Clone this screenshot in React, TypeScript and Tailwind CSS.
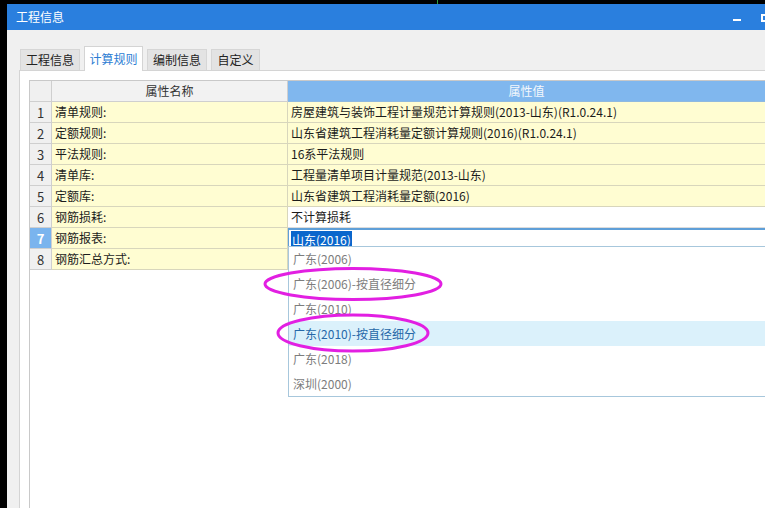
const font = { fontFamily: '"Noto Sans CJK SC", "Noto Sans", sans-serif' };

const rows = [
  { n: 1, name: '清单规则:', value: '房屋建筑与装饰工程计量规范计算规则(2013-山东)(R1.0.24.1)', yellow: true },
  { n: 2, name: '定额规则:', value: '山东省建筑工程消耗量定额计算规则(2016)(R1.0.24.1)', yellow: true },
  { n: 3, name: '平法规则:', value: '16系平法规则', yellow: true },
  { n: 4, name: '清单库:', value: '工程量清单项目计量规范(2013-山东)', yellow: true },
  { n: 5, name: '定额库:', value: '山东省建筑工程消耗量定额(2016)', yellow: true },
  { n: 6, name: '钢筋损耗:', value: '不计算损耗', yellow: false },
  { n: 7, name: '钢筋报表:', value: '', yellow: false },
  { n: 8, name: '钢筋汇总方式:', value: '', yellow: false },
];

const options = [
  '广东(2006)',
  '广东(2006)-按直径细分',
  '广东(2010)',
  '广东(2010)-按直径细分',
  '广东(2018)',
  '深圳(2000)',
];

function Tab({ label, active, w }: { label: string; active?: boolean; w: string }) {
  if (active) {
    return (
      <div className={`${w} h-[25px] -mb-px bg-white border border-b-0 border-[#d4d4d4] flex items-center justify-center text-[12px] text-[#2b7cd3] relative z-10`}>
        {label}
      </div>
    );
  }
  return (
    <div className={`${w} h-[21px] bg-[#e3e3e3] border border-b-0 border-[#d6d6d6] flex items-center justify-center text-[12px] text-[#222]`}>
      {label}
    </div>
  );
}

export default function App() {
  return (
    <div className="w-[765px] h-[508px] bg-black pt-[4px] pl-[7px] overflow-hidden relative" style={font}>
      <div className="absolute left-[437px] top-0 w-px h-[4px] bg-[#2a9d3a]" />
      <div className="flex flex-col h-full w-[800px]">
        {/* title bar */}
        <div className="h-[26px] bg-[#2a7fde] flex items-center pl-[9px] relative">
          <span className="text-white text-[12px] leading-none">工程信息</span>
          <div className="absolute left-[726px] top-[15px] w-[8px] h-[2px] bg-white" />
          <div className="absolute left-[754px] top-[10px] w-[9px] h-[8px] border-2 border-white" />
        </div>

        {/* body */}
        <div className="flex-1 bg-[#f0f0f0] pl-[12px] pt-[16px] flex flex-col">
          <div className="flex items-end h-[24px] pl-px gap-[4px]">
            <Tab label="工程信息" w="w-[60px]" />
            <Tab label="计算规则" w="w-[59px]" active />
            <Tab label="编制信息" w="w-[60px]" />
            <Tab label="自定义" w="w-[49px]" />
          </div>

          <div className="flex-1 bg-white border-l border-t border-[#d4d4d4] pl-[9px] pt-[9px]">
            <div className="h-full border-l border-t border-[#c9c9c9] relative text-[12px] leading-none text-[#1c1c1c]">
              {/* header */}
              <div className="flex h-[21px]">
                <div className="w-[22px] bg-[#f0f0f0] border-r border-b border-[#cfcfcf]" />
                <div className="w-[236px] bg-[#f2f2f2] border-r border-b border-[#cfcfcf] flex items-center justify-center text-[#333]">
                  属性名称
                </div>
                <div className="w-[477px] bg-[#80b7ee] border-b border-[#8fb9e0] flex items-center justify-center text-[#f4f8fc]">
                  属性值
                </div>
              </div>

              {rows.map((r) => (
                <div key={r.n} className="flex h-[21px]">
                  <div
                    className={`w-[22px] border-r border-b border-[#cfcfcf] flex items-center justify-center text-[13px] ${
                      r.n === 7 ? 'bg-[#7ab4ee] text-white font-bold' : 'bg-[#f0f0f0] text-[#333]'
                    }`}
                  >
                    {r.n}
                  </div>
                  <div className="w-[236px] bg-[#fffdd2] border-r border-b border-[#d8d6bc] flex items-center pl-[3px]">
                    {r.name}
                  </div>
                  {r.n === 7 ? (
                    <div className="w-[477px] border-t-2 border-l border-[#5f9fd8] bg-white flex items-start pl-[2px] pt-px">
                      <span className="bg-[#0a66cc] text-white h-[17px] flex items-center px-px">山东(2016)</span>
                    </div>
                  ) : (
                    <div
                      className={`w-[477px] border-b flex items-center pl-[3px] ${
                        r.yellow ? 'bg-[#fffdd2] border-[#d8d6bc]' : 'bg-white border-[#dcdcdc]'
                      }`}
                    >
                      {r.value}
                    </div>
                  )}
                </div>
              ))}

              {/* dropdown */}
              <div className="absolute left-[258px] top-[165px] w-[500px] h-[151px] bg-white border border-[#a7c7dc] flex flex-col">
                {options.map((o, i) => (
                  <div
                    key={o}
                    className={`h-[25px] flex items-center pl-[4px] ${
                      i === 3 ? 'bg-[#dbf1fb] text-[#2668a8]' : 'text-[#7d7d7d]'
                    }`}
                  >
                    {o}
                  </div>
                ))}
              </div>
            </div>
          </div>
        </div>
      </div>

      {/* annotation marks */}
      <svg className="absolute left-0 top-0 pointer-events-none" width="765" height="508">
        <ellipse cx="353" cy="284" rx="88" ry="15.5" fill="none" stroke="#e21fe2" strokeWidth="3" />
        <ellipse cx="353" cy="333" rx="75" ry="18" fill="none" stroke="#e21fe2" strokeWidth="3" />
      </svg>
    </div>
  );
}
